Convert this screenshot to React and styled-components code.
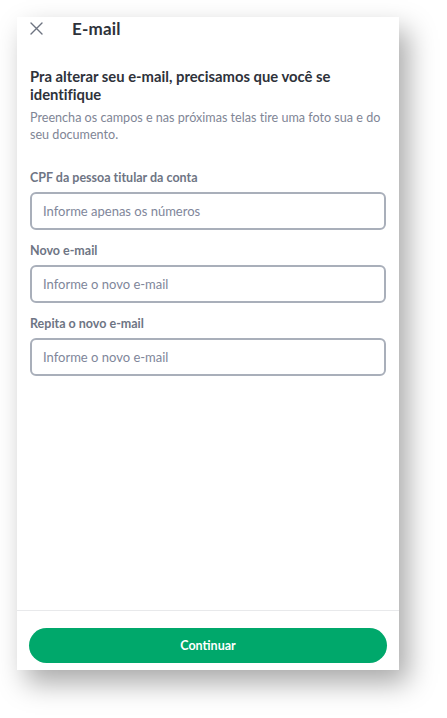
import React from "react";
import styled, { createGlobalStyle } from "styled-components";

const Global = createGlobalStyle`
  html, body { margin: 0; padding: 0; background: #ffffff; }
  body {
    font-family: "Lato", "Noto Sans", sans-serif;
    font-variant-ligatures: none;
    font-feature-settings: "liga" 0, "clig" 0;
  }
  * { box-sizing: border-box; }
`;

const Page = styled.div`
  padding: 17px 0 0 17px;
  width: 447px;
  height: 718px;
  overflow: hidden;
`;

const Card = styled.div`
  width: 382px;
  height: 653px;
  background: #ffffff;
  display: flex;
  flex-direction: column;
  box-shadow: 9px 13px 26px rgba(0, 0, 0, 0.34);
`;

const Header = styled.div`
  height: 22px;
  display: flex;
  align-items: center;
  padding-left: 13px;
`;

const CloseButton = styled.button`
  width: 13px;
  height: 13px;
  padding: 0;
  border: none;
  background: none;
  display: flex;
  align-items: center;
  justify-content: center;
  color: #6d7380;
  margin-right: 29px;
`;

const Title = styled.h1`
  margin: 0;
  font-size: 17px;
  font-weight: 700;
  color: #2e323a;
  letter-spacing: 0.2px;
`;

const Content = styled.div`
  flex: 1;
  padding: 28px 13px 0 13px;
`;

const Heading = styled.h2`
  margin: 0;
  font-size: 14.8px;
  line-height: 18px;
  font-weight: 700;
  color: #2e323a;
`;

const Description = styled.p`
  margin: 6px 0 0 0;
  font-size: 12.6px;
  line-height: 17px;
  color: #7f8696;
`;

const Field = styled.div`
  display: flex;
  flex-direction: column;
  margin-top: ${(p) => p.$gap}px;
`;

const Label = styled.label`
  font-size: 12.5px;
  line-height: 16px;
  font-weight: 700;
  color: #6e7584;
  margin-bottom: 6px;
`;

const Input = styled.input`
  height: 38px;
  width: 100%;
  border: 2px solid #a9afba;
  border-radius: 6px;
  padding: 0 11px;
  font-family: "Lato", "Noto Sans", sans-serif;
  font-size: 13px;
  color: #2e323a;
  background: #ffffff;
  outline: none;
  &::placeholder { color: #80869a; }
`;

const Footer = styled.div`
  border-top: 1px solid #e8e9eb;
  padding: 17px 12px 7px 12px;
`;

const PrimaryButton = styled.button`
  width: 100%;
  height: 35px;
  border: none;
  border-radius: 18px;
  background: #00a86b;
  color: #ffffff;
  font-family: "Lato", "Noto Sans", sans-serif;
  font-size: 12.5px;
  font-weight: 700;
`;

const fields = [
  { label: "CPF da pessoa titular da conta", placeholder: "Informe apenas os números", gap: 27 },
  { label: "Novo e-mail", placeholder: "Informe o novo e-mail", gap: 13 },
  { label: "Repita o novo e-mail", placeholder: "Informe o novo e-mail", gap: 13 },
];

export default function App() {
  return (
    <Page>
      <Global />
      <Card>
        <Header>
          <CloseButton aria-label="Fechar">
            <svg width="13" height="13" viewBox="0 0 13 13" fill="none">
              <path d="M1 1L12 12M12 1L1 12" stroke="currentColor" strokeWidth="1.4" strokeLinecap="round" />
            </svg>
          </CloseButton>
          <Title>E-mail</Title>
        </Header>
        <Content>
          <Heading>Pra alterar seu e-mail, precisamos que você se identifique</Heading>
          <Description>
            Preencha os campos e nas próximas telas tire uma foto sua e do seu documento.
          </Description>
          {fields.map((f, i) => (
            <Field key={i} $gap={f.gap}>
              <Label>{f.label}</Label>
              <Input placeholder={f.placeholder} />
            </Field>
          ))}
        </Content>
        <Footer>
          <PrimaryButton>Continuar</PrimaryButton>
        </Footer>
      </Card>
    </Page>
  );
}
